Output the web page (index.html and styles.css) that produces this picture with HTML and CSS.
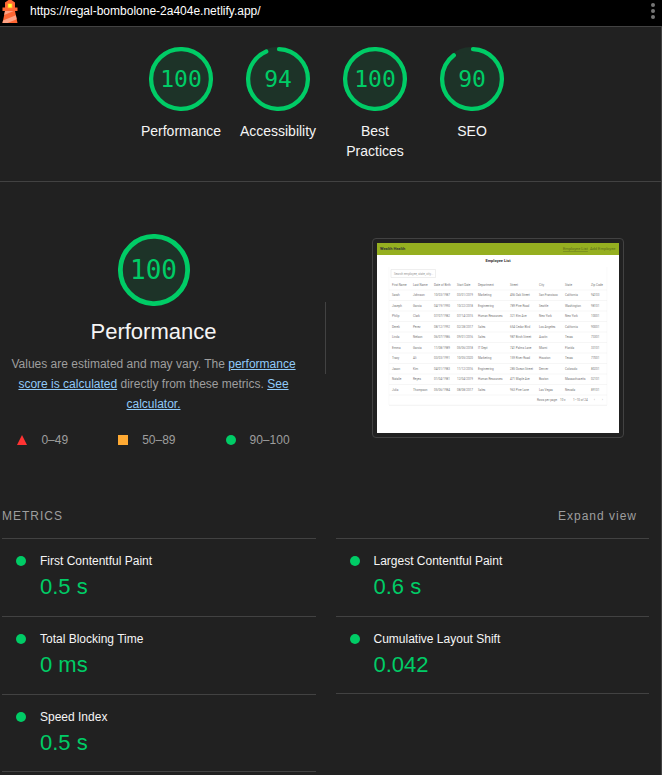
FILE: index.html
```html
<!DOCTYPE html>
<html lang="en">
<head>
<meta charset="utf-8">
<meta name="viewport" content="width=device-width, initial-scale=1">
<title>Lighthouse Report</title>
<link rel="stylesheet" href="styles.css">
</head>
<body>
<header class="topbar">
  <svg class="topbar-logo" viewBox="8 2 32 46" aria-hidden="true">
    <path fill="#ff6633" d="m14 7 10-7 10 7v10h5v7h-5l5 24H9l5-24H9v-7h5V7Z"/>
    <path fill="#ffa385" d="M31.561 24H14l-1.689 8.105L31.561 24ZM18.983 48H9l1.022-4.907L35.723 32.27l1.663 7.98L18.983 48Z"/>
    <path fill="#ff9933" d="M19 8.500h10v10H19z"/>
    <path fill="#ffff33" d="M20.500 10h7v7h-7z"/>
  </svg>
  <a class="topbar-url" href="#">https://regal-bombolone-2a404e.netlify.app/</a>
  <button class="topbar-menu" type="button" aria-label="Tools menu">
    <svg viewBox="0 0 6 22" aria-hidden="true"><circle cx="3" cy="5" r="2"/><circle cx="3" cy="11" r="2"/><circle cx="3" cy="17" r="2"/></svg>
  </button>
</header>

<main class="report">
  <nav class="scores" aria-label="Scores">
    <a class="gauge" href="#performance">
      <span class="gauge-dial">
        <svg viewBox="0 0 120 120" aria-hidden="true"><circle class="gauge-base" cx="60" cy="60" r="56"/><circle class="gauge-arc" cx="60" cy="60" r="56"/></svg>
        <span class="gauge-value">100</span>
      </span>
      <span class="gauge-label">Performance</span>
    </a>
    <a class="gauge" href="#accessibility">
      <span class="gauge-dial">
        <svg viewBox="0 0 120 120" aria-hidden="true"><circle class="gauge-base" cx="60" cy="60" r="56"/><circle class="gauge-arc" cx="60" cy="60" r="56" stroke-dasharray="326.7 351.9"/></svg>
        <span class="gauge-value">94</span>
      </span>
      <span class="gauge-label">Accessibility</span>
    </a>
    <a class="gauge" href="#best-practices">
      <span class="gauge-dial">
        <svg viewBox="0 0 120 120" aria-hidden="true"><circle class="gauge-base" cx="60" cy="60" r="56"/><circle class="gauge-arc" cx="60" cy="60" r="56"/></svg>
        <span class="gauge-value">100</span>
      </span>
      <span class="gauge-label">Best Practices</span>
    </a>
    <a class="gauge" href="#seo">
      <span class="gauge-dial">
        <svg viewBox="0 0 120 120" aria-hidden="true"><circle class="gauge-base" cx="60" cy="60" r="56"/><circle class="gauge-arc" cx="60" cy="60" r="56" stroke-dasharray="312.7 351.9"/></svg>
        <span class="gauge-value">90</span>
      </span>
      <span class="gauge-label">SEO</span>
    </a>
  </nav>

  <section class="category" id="performance">
    <div class="summary">
      <div class="gauge-dial gauge-dial-large">
        <svg viewBox="0 0 120 120" aria-hidden="true"><circle class="gauge-base" cx="60" cy="60" r="56"/><circle class="gauge-arc" cx="60" cy="60" r="56"/></svg>
        <span class="gauge-value">100</span>
      </div>
      <h1 class="summary-title">Performance</h1>
      <p class="summary-text">Values are estimated and may vary. The <a href="#">performance score is calculated</a> directly from these metrics. <a href="#">See calculator.</a></p>
      <ul class="legend">
        <li><svg class="mark" viewBox="0 0 10 10" aria-hidden="true"><path fill="#ff3333" d="M5 0l5 10H0z"/></svg>0–49</li>
        <li><svg class="mark" viewBox="0 0 10 10" aria-hidden="true"><path fill="#ffaa33" d="M0 0h10v10H0z"/></svg>50–89</li>
        <li><svg class="mark" viewBox="0 0 10 10" aria-hidden="true"><circle fill="#00cc66" cx="5" cy="5" r="5"/></svg>90–100</li>
      </ul>
    </div>
    <div class="divider"></div>
    <div class="preview">
      <svg viewBox="0 0 242 190" role="img" aria-label="Final screenshot of the audited page">
        <path fill="#fff" d="M0 0h242v190H0z"/>
        <path fill="#95af20" d="M0 0h242v12H0z"/>
        <g class="shot-nav">
          <text class="shot-brand" x="3" y="7">Wealth Health</text>
          <text class="shot-current" x="186" y="7">Employee List</text>
          <text x="213" y="7">Add Employee</text>
        </g>
        <text class="shot-title" x="121" y="19">Employee List</text>
        <path fill="none" stroke="#f6f6f6" stroke-width=".6" d="M12 24v138h218V24"/>
        <path fill="#fff" stroke="#e4e4e4" stroke-width=".6" d="M14 26.500h44.500v8H14z"/>
        <text class="shot-hint" x="17" y="31.500">Search employee, state, city...</text>
        <path fill="none" stroke="#ececec" stroke-width=".5" d="M12 47h218M12 57.500h218M12 68h218M12 78.500h218M12 89h218M12 99.500h218M12 110h218M12 120.500h218M12 131h218M12 141.500h218M12 152h218M12 162.500h218"/>
        <g class="shot-head">
          <text x="15" y="43">First Name</text><text x="36" y="43">Last Name</text><text x="57" y="43">Date of Birth</text><text x="80" y="43">Start Date</text><text x="101" y="43">Department</text><text x="133" y="43">Street</text><text x="162" y="43">City</text><text x="188" y="43">State</text><text x="214" y="43">Zip Code</text>
        </g>
        <g class="shot-row">
          <text x="15" y="53">Sarah</text><text x="36" y="53">Johnson</text><text x="57" y="53">10/03/1987</text><text x="80" y="53">03/01/2019</text><text x="101" y="53">Marketing</text><text x="133" y="53">456 Oak Street</text><text x="162" y="53">San Francisco</text><text x="188" y="53">California</text><text x="214" y="53">94103</text>
          <text x="15" y="64">Joseph</text><text x="36" y="64">Garcia</text><text x="57" y="64">04/19/1990</text><text x="80" y="64">10/22/2018</text><text x="101" y="64">Engineering</text><text x="133" y="64">789 Pine Road</text><text x="162" y="64">Seattle</text><text x="188" y="64">Washington</text><text x="214" y="64">98101</text>
          <text x="15" y="74">Philip</text><text x="36" y="74">Clark</text><text x="57" y="74">07/07/1982</text><text x="80" y="74">07/14/2015</text><text x="101" y="74">Human Resources</text><text x="133" y="74">321 Elm Ave</text><text x="162" y="74">New York</text><text x="188" y="74">New York</text><text x="214" y="74">10001</text>
          <text x="15" y="85">Derek</text><text x="36" y="85">Perez</text><text x="57" y="85">08/12/1992</text><text x="80" y="85">02/28/2017</text><text x="101" y="85">Sales</text><text x="133" y="85">654 Cedar Blvd</text><text x="162" y="85">Los Angeles</text><text x="188" y="85">California</text><text x="214" y="85">90001</text>
          <text x="15" y="95">Linda</text><text x="36" y="95">Nelson</text><text x="57" y="95">06/07/1986</text><text x="80" y="95">09/01/2016</text><text x="101" y="95">Sales</text><text x="133" y="95">987 Birch Street</text><text x="162" y="95">Austin</text><text x="188" y="95">Texas</text><text x="214" y="95">73301</text>
          <text x="15" y="106">Emma</text><text x="36" y="106">Garcia</text><text x="57" y="106">11/08/1989</text><text x="80" y="106">05/06/2018</text><text x="101" y="106">IT Dept</text><text x="133" y="106">741 Palms Lane</text><text x="162" y="106">Miami</text><text x="188" y="106">Florida</text><text x="214" y="106">33101</text>
          <text x="15" y="116">Tracy</text><text x="36" y="116">Ali</text><text x="57" y="116">03/03/1991</text><text x="80" y="116">10/05/2020</text><text x="101" y="116">Marketing</text><text x="133" y="116">159 River Road</text><text x="162" y="116">Houston</text><text x="188" y="116">Texas</text><text x="214" y="116">77001</text>
          <text x="15" y="127">Jason</text><text x="36" y="127">Kim</text><text x="57" y="127">04/01/1983</text><text x="80" y="127">11/12/2016</text><text x="101" y="127">Engineering</text><text x="133" y="127">285 Ocean Street</text><text x="162" y="127">Denver</text><text x="188" y="127">Colorado</text><text x="214" y="127">80201</text>
          <text x="15" y="137">Natalie</text><text x="36" y="137">Reyes</text><text x="57" y="137">01/04/1981</text><text x="80" y="137">12/04/2019</text><text x="101" y="137">Human Resources</text><text x="133" y="137">471 Maple Ave</text><text x="162" y="137">Boston</text><text x="188" y="137">Massachusetts</text><text x="214" y="137">02101</text>
          <text x="15" y="148">Julia</text><text x="36" y="148">Thompson</text><text x="57" y="148">05/06/1984</text><text x="80" y="148">08/08/2017</text><text x="101" y="148">Sales</text><text x="133" y="148">963 Pine Lane</text><text x="162" y="148">Las Vegas</text><text x="188" y="148">Nevada</text><text x="214" y="148">89101</text>
          <text x="160" y="158">Rows per page:</text><text x="183" y="158">10 ▾</text><text x="196" y="158">1–10 of 24</text><text x="217" y="158">‹</text><text x="225" y="158">›</text>
        </g>
      </svg>
    </div>
  </section>

  <section class="metrics">
    <div class="metrics-header">
      <h2>METRICS</h2>
      <button type="button">Expand view</button>
    </div>
    <div class="metrics-grid">
      <div class="metric"><span class="dot"></span><h3>First Contentful Paint</h3><p>0.5 s</p></div>
      <div class="metric"><span class="dot"></span><h3>Largest Contentful Paint</h3><p>0.6 s</p></div>
      <div class="metric"><span class="dot"></span><h3>Total Blocking Time</h3><p>0 ms</p></div>
      <div class="metric metric-end"><span class="dot"></span><h3>Cumulative Layout Shift</h3><p>0.042</p></div>
      <div class="metric metric-end"><span class="dot"></span><h3>Speed Index</h3><p>0.5 s</p></div>
    </div>
  </section>
</main>
</body>
</html>
```
FILE: styles.css
```css
:root {
  --bg: #212121;
  --line: #424242;
  --text: #f5f5f5;
  --muted: #9e9e9e;
  --link: #90caf9;
  --pass: #00cc66;
}

* {
  box-sizing: border-box;
}

body {
  display: flex;
  flex-direction: column;
  min-height: 100vh;
  margin: 0;
  background: var(--bg);
  color: var(--text);
  font: 12px/20px "Liberation Sans", Arial, sans-serif;
}

h1, h2, h3, p, ul {
  margin: 0;
  padding: 0;
  font-weight: 400;
}

a {
  color: inherit;
  text-decoration: none;
}

button {
  padding: 0;
  border: 0;
  background: none;
  color: inherit;
  font: inherit;
  cursor: pointer;
}

svg {
  display: block;
}

/* Top bar */
.topbar {
  display: flex;
  align-items: flex-start;
  gap: 12px;
  padding: 0 6px 3px 2px;
  border-bottom: 1px solid var(--line);
  background: #000;
  color: #fff;
}

.topbar-logo {
  width: 16px;
  height: 23px;
}

.topbar-url {
  flex: 1;
  line-height: 22px;
}

.topbar-menu svg {
  width: 6px;
  height: 22px;
  fill: #757575;
}

.report {
  flex: 1;
  border-right: 1px solid var(--line);
}

/* Gauges */
.scores {
  display: grid;
  grid-template-columns: repeat(4, 97px);
  justify-content: center;
  padding: 20px 10px 20px 2px;
  border-bottom: 1px solid var(--line);
}

.gauge {
  display: flex;
  flex-direction: column;
  align-items: center;
  gap: 10px;
}

.gauge-dial {
  display: grid;
  place-items: center;
  width: 64px;
  height: 64px;
  font-size: 23px;
}

.gauge-dial-large {
  width: 72px;
  height: 72px;
  font-size: 26px;
}

.gauge-dial > * {
  grid-area: 1 / 1;
}

.gauge-dial svg {
  width: 100%;
  height: 100%;
}

.gauge-base {
  fill: var(--pass);
  stroke: var(--pass);
  stroke-width: 8;
  opacity: 0.1;
}

.gauge-arc {
  fill: none;
  stroke: var(--pass);
  stroke-width: 8;
  stroke-linecap: round;
  transform: rotate(-88deg);
  transform-origin: 60px 60px;
}

.gauge-value {
  color: var(--pass);
  font-family: "DejaVu Sans Mono", monospace;
  line-height: 1;
}

.gauge-label {
  padding: 0 8px;
  font-size: 14px;
  text-align: center;
}

/* Category summary */
.category {
  display: grid;
  grid-template-columns: 1fr 1px 1fr;
  align-items: center;
  gap: 20px;
  padding: 44px 12px 0 2px;
}

.summary {
  display: flex;
  flex-direction: column;
  align-items: center;
  padding-top: 8px;
  color: var(--muted);
  text-align: center;
}

.summary-title {
  margin: 8px 0 4px;
  color: var(--text);
  font-size: 22px;
  line-height: 36px;
}

.summary-text a {
  color: var(--link);
  text-decoration: underline;
}

.legend {
  display: flex;
  gap: 50px;
  margin-top: 16px;
  list-style: none;
}

.legend li {
  display: flex;
  align-items: center;
  gap: 14px;
}

.mark {
  width: 10px;
  height: 10px;
}

.divider {
  height: 72px;
  background: var(--line);
}

.preview {
  justify-self: center;
  width: 100%;
  max-width: 252px;
  padding: 4px;
  border: 1px solid var(--line);
  border-radius: 4px;
}

.preview text {
  font-family: Roboto, sans-serif;
  font-size: 3px;
  fill: #777;
}

.preview .shot-nav text {
  font-size: 4px;
  fill: #5b6b1c;
}

.preview .shot-nav .shot-brand {
  font-weight: 700;
  fill: #333;
}

.shot-current {
  text-decoration: underline;
}

.preview .shot-title {
  font-size: 4px;
  font-weight: 700;
  text-anchor: middle;
  fill: #333;
}

.preview .shot-hint {
  fill: #999;
}

/* Metrics */
.metrics {
  padding: 56px 12px 0 2px;
}

.metrics-header {
  display: flex;
  justify-content: space-between;
  padding: 0 12px 12px 0;
  color: var(--muted);
}

.metrics-header h2,
.metrics-header button {
  font-size: 12px;
  letter-spacing: 1px;
}

.metrics-grid {
  display: grid;
  grid-template-columns: 1fr 1fr;
  align-items: start;
  column-gap: 20px;
}

.metric {
  display: grid;
  grid-template-columns: 10px 1fr;
  align-items: center;
  column-gap: 14px;
  padding: 12px 0 13px 14px;
  border-top: 1px solid var(--line);
}

.metric-end {
  padding-bottom: 12px;
  border-bottom: 1px solid var(--line);
}

.dot {
  height: 10px;
  border-radius: 50%;
  background: var(--pass);
}

.metric h3 {
  font-size: 12px;
}

.metric p {
  grid-column: 2;
  color: var(--pass);
  font-size: 22px;
  line-height: 32px;
}
```
